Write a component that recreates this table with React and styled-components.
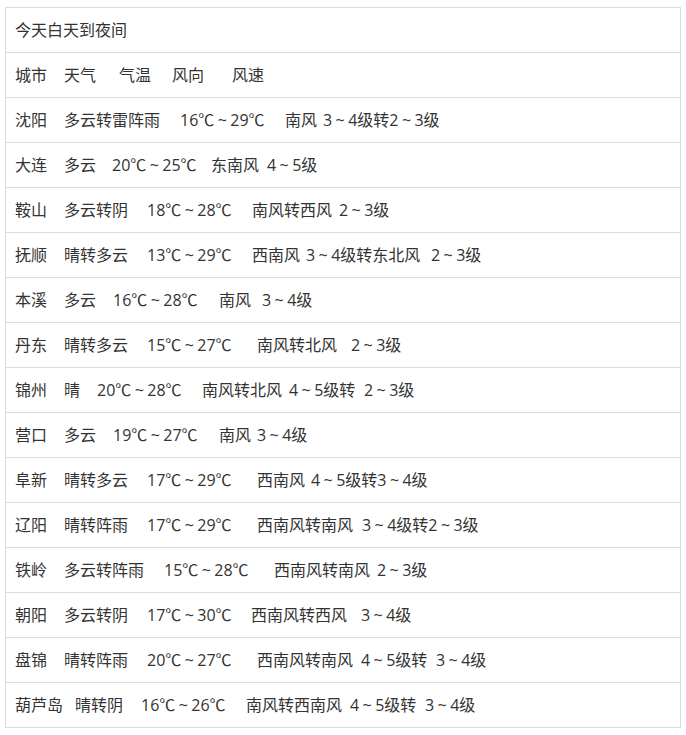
import React from "react";
import styled, { createGlobalStyle } from "styled-components";

const GlobalStyle = createGlobalStyle`
  html, body {
    margin: 0;
    padding: 0;
    background: #fff;
  }
  body {
    font-family: "Open Sans", "Noto Sans CJK SC", sans-serif;
  }
`;

const Page = styled.div`
  padding: 7px 0 0 5px;
`;

const Table = styled.div`
  width: 676px;
  box-sizing: border-box;
  border: 1px solid #dcdcdc;
  border-bottom: none;
  display: flex;
  flex-direction: column;
`;

const Row = styled.div`
  height: 45px;
  box-sizing: border-box;
  border-bottom: 1px solid #dcdcdc;
  display: flex;
  align-items: center;
  padding: 0 0 2px 9px;
  font-size: 16px;
  color: #333;
`;

const Seg = styled.span`
  display: inline-block;
  white-space: pre;
  width: ${(p) => (p.$w ? `${p.$w}px` : "auto")};
  flex: none;
`;

// fullwidth tilde, drawn small like the original font does
const Tilde = styled.span`
  display: inline-block;
  width: 16px;
  text-align: center;
`;

// [text, distance to next item start]
const rows = [
  [["今天白天到夜间"]],
  [["城市", 49], ["天气", 55], ["气温", 53], ["风向", 60], ["风速"]],
  [["沈阳", 49], ["多云转雷阵雨", 116], ["16℃～29℃", 105], ["南风", 38], ["3～4级转2～3级"]],
  [["大连", 49], ["多云", 48], ["20℃～25℃", 99], ["东南风", 56], ["4～5级"]],
  [["鞍山", 49], ["多云转阴", 83], ["18℃～28℃", 105], ["南风转西风", 87], ["2～3级"]],
  [["抚顺", 49], ["晴转多云", 83], ["13℃～29℃", 105], ["西南风", 54], ["3～4级转东北风", 125], ["2～3级"]],
  [["本溪", 49], ["多云", 49], ["16℃～28℃", 106], ["南风", 43], ["3～4级"]],
  [["丹东", 49], ["晴转多云", 83], ["15℃～27℃", 110], ["南风转北风", 94], ["2～3级"]],
  [["锦州", 49], ["晴", 33], ["20℃～28℃", 105], ["南风转北风", 87], ["4～5级转", 75], ["2～3级"]],
  [["营口", 49], ["多云", 49], ["19℃～27℃", 106], ["南风", 38], ["3～4级"]],
  [["阜新", 49], ["晴转多云", 83], ["17℃～29℃", 110], ["西南风", 54], ["4～5级转3～4级"]],
  [["辽阳", 49], ["晴转阵雨", 83], ["17℃～29℃", 110], ["西南风转南风", 105], ["3～4级转2～3级"]],
  [["铁岭", 49], ["多云转阵雨", 100], ["15℃～28℃", 110], ["西南风转南风", 103], ["2～3级"]],
  [["朝阳", 49], ["多云转阴", 83], ["17℃～30℃", 104], ["西南风转西风", 110], ["3～4级"]],
  [["盘锦", 49], ["晴转阵雨", 83], ["20℃～27℃", 110], ["西南风转南风", 104], ["4～5级转", 75], ["3～4级"]],
  [["葫芦岛", 60], ["晴转阴", 66], ["16℃～26℃", 105], ["南风转西南风", 104], ["4～5级转", 75], ["3～4级"]],
];

const renderText = (text) =>
  text.split("～").flatMap((part, k) =>
    k === 0 ? [part] : [<Tilde key={k}>~</Tilde>, part]
  );

const App = () => {
  return (
    <Page>
      <GlobalStyle />
      <Table>
        {rows.map((segs, i) => (
          <Row key={i}>
            {segs.map(([text, w], j) => (
              <Seg key={j} $w={w}>
                {renderText(text)}
              </Seg>
            ))}
          </Row>
        ))}
      </Table>
    </Page>
  );
};

export default App;
